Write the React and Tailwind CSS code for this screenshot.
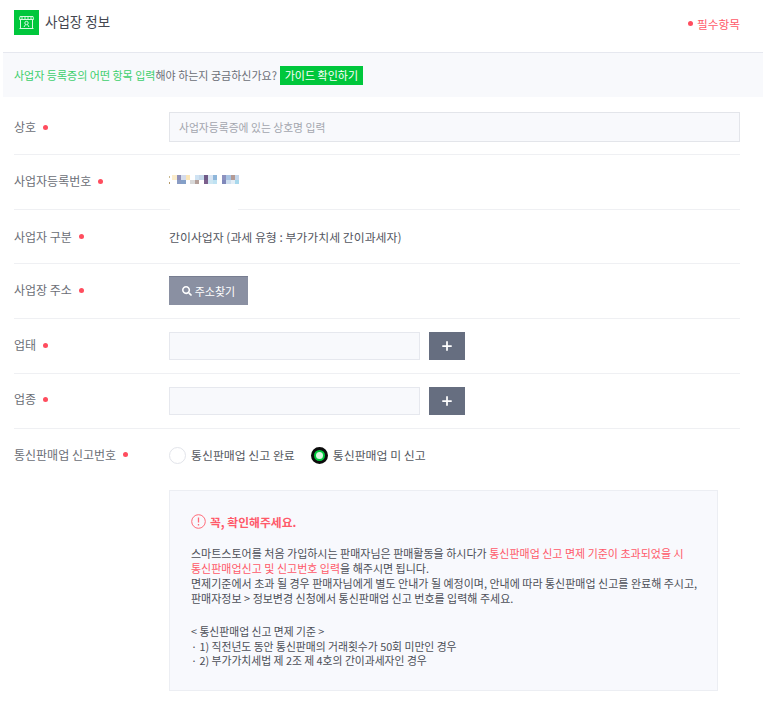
import { Plus } from "lucide-react";
import { FaSearch } from "react-icons/fa";

const FONT = "font-['Noto_Sans_CJK_KR','Noto_Sans',sans-serif]";

// 사업자등록번호 가림 처리 (모자이크)
const MOSAIC = [
  ["#fbeccb", "#8f8fb8", "#d5dcec", "#fbe6b8", "#ffffff", "#cfe3f3", "#c5d8ea", "#6f5a86", "#d8e4f2", "#8fb6da", "#ffffff", "#8d92bf", "#a9c4e4", "#b49a94", "#c3d6ec"],
  ["#ffffff", "#8a9cc4", "#84a0c8", "#ffffff", "#d9d9d9", "#b4a09a", "#ffffff", "#7c5f8c", "#cde6f2", "#bfe2f2", "#ffffff", "#8088ba", "#cfe0f0", "#e4eef6", "#a8d8ec"],
];

function Dot() {
  return <span className="w-[5px] h-[5px] rounded-full bg-[#ff4d5e] inline-block" />;
}

function Row({ label, gap = "ml-[7px]", height = "h-[55px]", nudge = "", plain, cut, className = "", children }) {
  return (
    <div className={`relative flex items-center ${height} ${className} ${plain ? "" : "border-b border-[#eff0f3]"}`}>
      <div className={`w-[155px] shrink-0 flex items-center text-[12px] text-[#6b6e76] ${nudge}`}>
        {label}
        <span className={`flex ${gap}`}><Dot /></span>
      </div>
      <div className="flex-1 flex items-center">{children}</div>
      {cut && <div className="absolute left-[156px] -bottom-px w-[68px] h-[2px] bg-white" />}
    </div>
  );
}

function AddField() {
  return (
    <>
      <div className="w-[251px] h-[28px] bg-[#f8f9fc] border border-[#e6e8ee]" />
      <button className="ml-[9px] w-[36px] h-[28px] bg-[#666e80] flex items-center justify-center text-white">
        <Plus size={14} strokeWidth={3} />
      </button>
    </>
  );
}

function Radio({ checked, label }) {
  return (
    <label className="flex items-center text-[11.900px] text-[#555860]">
      {checked ? (
        <span className="w-[17px] h-[17px] rounded-full bg-[#00c73c] border-[3px] border-[#0c0c0c] flex items-center justify-center mr-[5px]">
          <span className="w-[7px] h-[7px] rounded-full bg-[#d8f8e0]" />
        </span>
      ) : (
        <span className="w-[17px] h-[17px] rounded-full bg-white border border-[#e2e4ea] mr-[5px]" />
      )}
      <span className="-mt-[1px]">{label}</span>
    </label>
  );
}

export default function App() {
  return (
    <div className={`w-[766px] h-[724px] bg-white overflow-hidden ${FONT}`}>
      {/* 타이틀 */}
      <div className="h-[52px] pl-[14px] pr-[26px] flex items-start justify-between">
        <div className="flex items-center mt-[10px]">
          <div className="w-[25px] h-[25px] bg-[#00c73c] flex items-center justify-center">
            <svg width="17" height="17" viewBox="0 0 17 17" fill="none" stroke="#d6f7df" strokeWidth="1">
              <path d="M2 2.500h13l.5 3H1.500z" />
              <path d="M4 2.500v3M7 2.500v3M10 2.500v3M13 2.500v3" />
              <path d="M2.500 5.500v9h12v-9M1.500 14.500h14" />
              <circle cx="8.500" cy="9" r="1.700" />
              <path d="M6 13l1.500-2.500M11 13L9.500 10.500" />
            </svg>
          </div>
          <span className="ml-[6px] text-[13.500px] text-[#444750] leading-[20px] -mt-[4px]">사업장 정보</span>
        </div>
        <div className="flex items-center mt-[15px] text-[11.700px] text-[#ff5a6a]">
          <span className="w-[5px] h-[5px] rounded-full bg-[#ff4d5e] mr-[4px]" />
          필수항목
        </div>
      </div>

      {/* 안내 배너 */}
      <div className="mx-[3px] h-[45px] bg-[#f8f9fc] border-t border-[#e6e8ef] pl-[11px] flex items-center text-[11px] text-[#6b6e76]">
        <span className="text-[#3ecf6c]">사업자 등록증의 어떤 항목 입력</span>
        <span>해야 하는지 궁금하신가요?</span>
        <button className="ml-[3px] w-[83px] h-[19px] bg-[#00c73c] text-white text-[11px] leading-[19px] text-center">
          가이드 확인하기
        </button>
      </div>

      <div className="pl-[14px] pr-[26px]">
        <Row label="상호" height="h-[58px]" className="pt-[3px]">
          <div className="w-full h-[30px] bg-[#f8f9fc] border border-[#e3e5ea] pl-[9px] flex items-center text-[10.800px] text-[#a3a6ae]">
            사업자등록증에 있는 상호명 입력
          </div>
        </Row>
        <Row label="사업자등록번호" cut nudge="-mt-[2px]">
          <svg width="70" height="12" viewBox="0 0 70 12" className="-mt-[4px]" shapeRendering="crispEdges">
            <rect x="0" y="2" width="1" height="2" fill="#c9b98e" />
            <rect x="0" y="8" width="1" height="2" fill="#b59a6a" />
            {MOSAIC.map((line, r) =>
              line.map((c, i) => (
                <rect key={`${r}-${i}`} x={3 + i * 4.5} y={r * 4.5 + 1} width="4.500" height="4.500" fill={c} />
              ))
            )}
          </svg>
        </Row>
        <Row label="사업자 구분" height="h-[54px]">
          <span className="text-[11.900px] text-[#54575f]">간이사업자 (과세 유형 : 부가가치세 간이과세자)</span>
        </Row>
        <Row label="사업장 주소" nudge="-mt-[2px]">
          <button className="w-[79px] h-[29px] bg-[#8a90a2] border-t border-[#777d90] text-white text-[11px] flex items-center justify-center -mt-[1px]">
            <FaSearch size={10} className="mr-[3px]" />
            주소찾기
          </button>
        </Row>
        <Row label="업태" nudge="-mt-[2px]">
          <AddField />
        </Row>
        <Row label="업종" nudge="-mt-[4px]">
          <AddField />
        </Row>
        <Row label="통신판매업 신고번호" plain nudge="-mt-[4px]">
          <div className="flex items-center -mt-[2px]">
            <Radio label="통신판매업 신고 완료" />
            <span className="w-[16px]" />
            <Radio checked label="통신판매업 미 신고" />
          </div>
        </Row>

        {/* 주의사항 박스 */}
        <div className="ml-[155px] mr-[22px] mt-[6px] h-[201px] bg-[#f8f9fd] border border-[#eceef3] pl-[21px] pt-[21px] text-[11px] leading-[15px] text-[#4c4f57]">
          <div className="flex items-center text-[11.800px] font-bold text-[#ff5a6a] h-[18px]">
            <svg width="15" height="15" viewBox="0 0 15 15" fill="none" className="mr-[4px]">
              <circle cx="7.500" cy="7.500" r="6.800" stroke="#ff6b78" strokeWidth="1" />
              <path d="M7.500 3.500v5M7.500 10v1.500" stroke="#ff6b78" strokeWidth="1.300" />
            </svg>
            꼭, 확인해주세요.
          </div>
          <div className="mt-[16px] whitespace-nowrap">
            <div>
              스마트스토어를 처음 가입하시는 판매자님은 판매활동을 하시다가{" "}
              <span className="text-[#ff5a6a]">통신판매업 신고 면제 기준이 초과되었을 시</span>
            </div>
            <div>
              <span className="text-[#ff5a6a]">통신판매업신고 및 신고번호 입력</span>을 해주시면 됩니다.
            </div>
            <div>면제기준에서 초과 될 경우 판매자님에게 별도 안내가 될 예정이며, 안내에 따라 통신판매업 신고를 완료해 주시고,</div>
            <div>판매자정보 &gt; 정보변경 신청에서 통신판매업 신고 번호를 입력해 주세요.</div>
            <div className="mt-[18px] text-[10.800px] leading-[14.500px]">
              <div>&lt; 통신판매업 신고 면제 기준 &gt;</div>
              <div>· 1) 직전년도 동안 통신판매의 거래횟수가 50회 미만인 경우</div>
              <div>· 2) 부가가치세법 제 2조 제 4호의 간이과세자인 경우</div>
            </div>
          </div>
        </div>
      </div>
    </div>
  );
}
